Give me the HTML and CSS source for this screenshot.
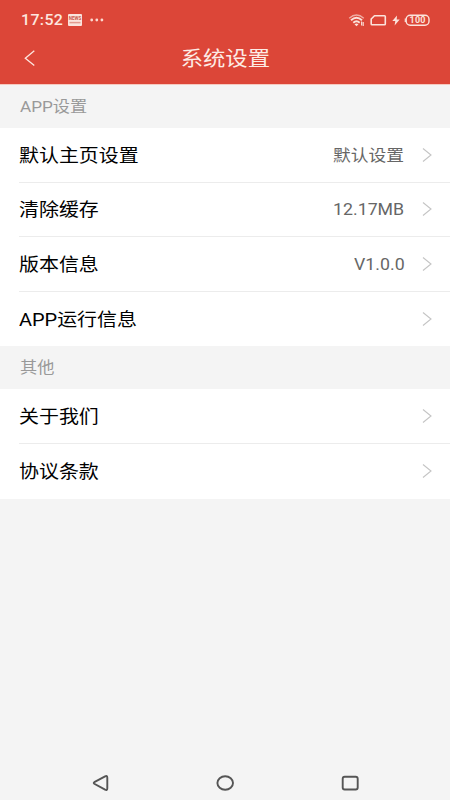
FILE: index.html
```html
<!DOCTYPE html>
<html lang="zh-CN">
<head>
<meta charset="utf-8">
<title>系统设置</title>
<link rel="stylesheet" href="styles.css">
</head>
<body>
<header class="top">
  <div class="status">
    <span class="time"><span class="clock">17:52</span></span>
    <svg class="news" width="14" height="12" viewBox="0 0 14 12"><rect width="14" height="12" rx="1" fill="#fbe3dc"/><text x="7" y="5.700" class="news-text">NEWS</text><path d="M1.500 8.600h11" stroke="#e39a8e" stroke-width="1.500"/></svg>
    <svg class="dots" width="14" height="4" viewBox="0 0 14 4" fill="#fbd9d0"><circle cx="1.7" cy="2" r="1.4"/><circle cx="6.8" cy="2" r="1.4"/><circle cx="11.9" cy="2" r="1.4"/></svg>
    <svg class="signals" width="84" height="16" viewBox="0 0 84 16" fill="none" stroke="#fbe3dc">
      <path d="M1.2 6.2Q8.5-.2 15.800 6.200" stroke-width="1.3" opacity=".65"/>
      <path d="M3 8.200Q8.500 3.200 14 8.200M5.300 10.700Q8.500 7.800 11.700 10.700" stroke-width="1.900"/>
      <path d="M6.500 12.200Q8.500 10.700 10.500 12.200L8.500 14.200z" fill="#fbe3dc" stroke="none"/>
      <path d="M13.600 9.500v4M15.200 10v4" stroke-width="1.100"/>
      <path d="M26.500 3.700H36.500Q37.300 3.700 37.300 4.500V12Q37.300 12.800 36.500 12.800H24Q23.200 12.800 23.200 12V7Z" stroke-width="1.600" stroke-linejoin="round"/>
      <path d="M49 3.500L44.300 9h3l-.7 4.500L51.700 7.500h-3z" fill="#fbe3dc" stroke="none"/>
      <rect x="58.200" y="3.200" width="22.800" height="10" rx="4" stroke-width="1.400"/>
      <path d="M57.300 6.500v3.500" stroke-width="1.200"/>
      <text x="69.600" y="11.300" class="charge">100</text>
    </svg>
  </div>
  <div class="nav">
    <svg class="back" width="12" height="18" viewBox="0 0 12 18"><path d="M10.300 1.800L1.300 9.200L10.300 16.600" fill="none" stroke="#fde6df" stroke-width="1.300"/></svg>
    <h1 class="title"><span class="wide">系统设置</span></h1>
  </div>
</header>
<main>
  <h2 class="section"><span class="wide">APP设置</span></h2>
  <ul class="list">
    <li class="row"><span class="label wide">默认主页设置</span><span class="value wide">默认设置</span><svg class="arrow" viewBox="0 0 10 16"><path d="M1 1.500L9 8L1 14.500"/></svg></li>
    <li class="row"><span class="label wide">清除缓存</span><span class="value latin wide">12.17MB</span><svg class="arrow" viewBox="0 0 10 16"><path d="M1 1.500L9 8L1 14.500"/></svg></li>
    <li class="row"><span class="label wide">版本信息</span><span class="value latin wide">V1.0.0</span><svg class="arrow" viewBox="0 0 10 16"><path d="M1 1.500L9 8L1 14.500"/></svg></li>
    <li class="row"><span class="label wide">APP运行信息</span><svg class="arrow" viewBox="0 0 10 16"><path d="M1 1.500L9 8L1 14.500"/></svg></li>
  </ul>
  <h2 class="section"><span class="wide">其他</span></h2>
  <ul class="list">
    <li class="row"><span class="label wide">关于我们</span><svg class="arrow" viewBox="0 0 10 16"><path d="M1 1.500L9 8L1 14.500"/></svg></li>
    <li class="row"><span class="label wide">协议条款</span><svg class="arrow" viewBox="0 0 10 16"><path d="M1 1.500L9 8L1 14.500"/></svg></li>
  </ul>
</main>
<footer class="system">
  <svg width="20" height="18" viewBox="0 0 20 18"><path d="M4.300 8.200L15.100 2.400Q17.300 1.300 17.300 3.700V14.300Q17.300 16.700 15.100 15.600L4.300 9.800Q3.200 9 4.300 8.200Z"/></svg>
  <svg width="20" height="18" viewBox="0 0 20 18"><ellipse cx="10.200" cy="9" rx="7.800" ry="6.800"/></svg>
  <svg width="20" height="18" viewBox="0 0 20 18"><rect x="2.700" y="2.700" width="15" height="12.800" rx="2"/></svg>
</footer>
</body>
</html>
```
FILE: styles.css
```css
* { box-sizing: border-box; }
body {
  margin: 0;
  height: 800px;
  display: flex;
  flex-direction: column;
  background: #f4f4f4;
  color: #000;
  font-family: Roboto, "Noto Sans CJK SC", sans-serif;
  overflow: hidden;
}
h1, h2, ul { margin: 0; padding: 0; font-weight: 400; }
/* Letterforms are slightly extended horizontally. */
.wide { display: inline-block; transform: scaleX(1.108); transform-origin: left center; white-space: nowrap; }
.top { height: 85px; background: #dc4638; border-bottom: 1px solid #f6c9bf; }
.status { height: 39px; display: flex; align-items: center; padding: 1px 18px 0 21px; }
.time { width: 47px; font-size: 14px; font-weight: 500; letter-spacing: .3px; color: #fde6df; }
.clock { display: inline-block; transform: scaleX(1.14); transform-origin: left center; }
.news-text { fill: #c9584b; stroke: none; font-size: 4.500px; font-weight: 700; text-anchor: middle; }
.dots { margin-left: 8px; }
.signals { margin-left: auto; }
.charge { fill: #fbe3dc; stroke: none; font-size: 9px; font-weight: 700; text-anchor: middle; letter-spacing: .2px; }
.nav { height: 38px; display: grid; grid-template-columns: 48px 1fr 48px; align-items: center; }
.back { margin-left: 24px; }
.title { padding-top: 2px; font-size: 20.200px; line-height: 28px; text-align: center; color: #fdebe5; }
.title .wide { transform-origin: center; }
.section { height: 43px; padding: 1px 0 0 19.500px; font-size: 15.500px; line-height: 43px; color: #999; }
.list { list-style: none; background: #fff; }
.row { height: 54.600px; display: flex; align-items: center; margin-left: 19px; padding-right: 18.500px; border-bottom: 1px solid #ececec; }
.row:last-child { border-bottom-color: transparent; }
.label { padding-bottom: 2px; font-size: 18px; }
.value { margin-left: auto; padding-bottom: 2px; font-size: 16px; color: #666; transform-origin: right center; }
.latin { padding-bottom: 0; padding-top: 1px; }
.arrow { width: 10px; height: 16px; margin-left: 17.300px; fill: none; stroke: #c4c4c4; stroke-width: 1.100; }
.label + .arrow { margin-left: auto; }
.system { height: 34px; margin-top: auto; padding: 0 90px; display: flex; justify-content: space-between; align-items: center; fill: none; stroke: #555; stroke-width: 1.900; }
```
